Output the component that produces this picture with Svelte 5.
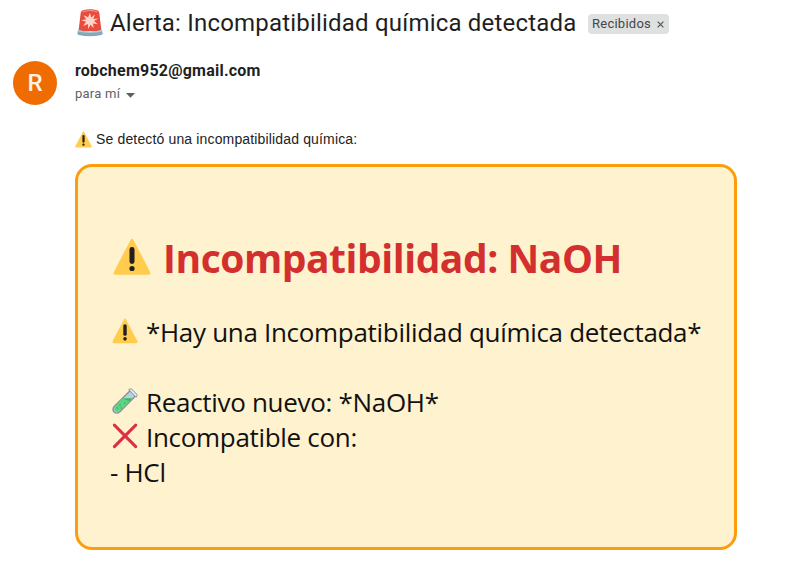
<script>
  let labelVisible = $state(true);
</script>

{#snippet warning()}
  <svg class="emoji" viewBox="0 0 38 38" aria-hidden="true">
    <path d="M17.4 2.2Q19-.6 20.6 2.2L37 33.7Q38.2 36.7 35.3 36.8H2.7Q-.2 36.7 1 33.7Z" fill="#ffcc4d" />
    <rect x="16.5" y="9" width="5" height="17" rx="2.4" fill="#231f20" />
    <circle cx="19" cy="30.5" r="2.6" fill="#231f20" />
  </svg>
{/snippet}

<main>
  <header class="subject">
    <svg class="siren" viewBox="0 0 26 28" aria-hidden="true">
      <path d="M5.2 1.5Q13-1 20.8 1.5Q22 2 22.3 4L24.5 22H1.5L3.7 4Q4 2 5.2 1.5Z" fill="#e94b3f" />
      <path d="M5.5 3Q13-.3 20.5 3" fill="none" stroke="#f58b7d" stroke-width="1.3" />
      <path d="m13 3.8 1.2 4.8 3.7-3.2-1.5 4.5 5-.4-4.3 2.5 3.8 3.3-5-.8.8 4.7-3.2-3.5-2.2 4.3-.5-5-4.6 2 2.8-4.2-4.6-1.5 4.8-1.1-2.7-4 4.6 2Z" fill="#ffd4c6" />
      <path d="M1 20.8Q13 24.6 25 20.8L25.6 24.4Q25.5 25.4 24.3 25.9Q13 28.8 1.7 25.9Q.5 25.4.4 24.4Z" fill="#84a8b9" />
      <path d="M1 20.8Q13 24.6 25 20.8L25.3 22.5Q13 25.3.7 22.5Z" fill="#b0cbd6" />
    </svg>
    <h1>Alerta: Incompatibilidad química detectada</h1>
    {#if labelVisible}
      <div class="label"><span>Recibidos</span>
        <button aria-label="Quitar Recibidos" onclick={() => (labelVisible = false)}>
          <svg width="7" height="7" viewBox="0 0 7 7"><path d="m.6.6 5.8 5.8M6.4.6.6 6.4" stroke="#50565a" stroke-width="1.2" /></svg>
        </button>
      </div>
    {/if}
  </header>

  <section class="sender">
    <div class="avatar">R</div>
    <div>
      <div class="address">robchem952@gmail.com</div>
      <div class="recipient"><span>para mí</span><svg width="9" height="5" viewBox="0 0 9 5"><path d="M0 0h9L4.5 4.8Z" fill="#5b5f63" /></svg></div>
    </div>
  </section>

  <p class="intro">{@render warning()}<span>Se detectó una incompatibilidad química:</span></p>

  <article>
    <h2>{@render warning()}<span>Incompatibilidad: NaOH</span></h2>
    <div class="lines">
      <p class="notice">{@render warning()}<span>*Hay una Incompatibilidad química detectada*</span></p>
      <p>
        <svg class="emoji" viewBox="0 0 26 26" aria-hidden="true">
          <path d="m18.3 2.4 5.4 5.4L8.2 23.4c-4.5 4.2-9.9-1-5.6-5.4Z" fill="#bad0d9" stroke="#85939d" stroke-width="1.4" />
          <path d="m10.2 10.4 10.2 0L7.8 22.7c-3.4 3-7.4-.8-4.5-4.2Z" fill="#59d77f" />
          <path d="m10.4 10.5 9.8-.2-2.8 3Z" fill="#36ba65" />
          <path d="m16.6 1.6 1.8-.8q.8-.2 1.4.4l5 5q.7.8.2 1.6l-1 1.5Z" fill="#d8e7ec" stroke="#8798a3" />
          <g fill="#3aa660"><circle cx="12.6" cy="15" r=".8" /><circle cx="8" cy="17" r=".8" /><circle cx="9.3" cy="20" r=".7" /><circle cx="5.4" cy="20" r=".7" /></g>
        </svg><span>Reactivo nuevo: *NaOH*</span>
      </p>
      <p>
        <svg class="emoji" viewBox="0 0 26 26" aria-hidden="true"><path d="m2.4 2.1 21.3 21.5M23.7 2.1 2.4 23.6" fill="none" stroke="#dd2e44" stroke-width="3" stroke-linecap="round" /></svg><span>Incompatible con:</span>
      </p>
      <p><span>- HCl</span></p>
    </div>
  </article>
</main>

<style>
  :global(body) { background: #fff; }
  main { width: 786px; height: 578px; box-sizing: border-box; overflow: hidden; font-family: Roboto, "Liberation Sans", sans-serif; color: #202124; }
  h1, h2, p { margin: 0; font-weight: 400; white-space: nowrap; }
  svg { display: block; flex: none; }
  .subject { height: 46px; padding-left: 77px; display: flex; align-items: center; }
  .siren { width: 26px; height: 28px; }
  h1 { margin-left: 7px; width: 478px; font: 400 24px/32px Roboto, sans-serif; color: #1f1f1f; letter-spacing: .2px; }
  .label { display: flex; align-items: center; width: 81px; height: 20px; box-sizing: border-box; padding-left: 4px; border-radius: 4px; background: #dfe1e0; color: #444746; font: 400 13px/20px Roboto, sans-serif; letter-spacing: .25px; margin-top: 2px; }
  .label span { width: 63px; }
  button { display: block; padding: 0; border: 0; background: none; margin-left: 2px; }
  .sender { display: flex; margin-top: 15px; padding-left: 13px; height: 64px; }
  .avatar { width: 44px; height: 44px; margin-right: 18px; border-radius: 50%; background: #ef6c00; color: #fff3e9; font-size: 24px; font-weight: 500; line-height: 45px; text-align: center; }
  .address { font: 700 16px/20px Roboto, sans-serif; letter-spacing: .22px; color: #1f1f1f; }
  .recipient { margin-top: 4px; display: flex; align-items: center; gap: 6px; font-size: 13px; line-height: 18px; color: #5e6266; letter-spacing: .25px; }
  .recipient svg { margin-top: 2px; }
  .intro { display: flex; align-items: center; height: 28px; padding-left: 75px; font: 14px/20px "Liberation Sans", sans-serif; letter-spacing: .15px; color: #222; }
  .intro .emoji { width: 17px; height: 17px; margin-right: 4px; }
  article { box-sizing: border-box; width: 662px; height: 386px; margin: 11px 0 0 75px; padding: 64px 0 0 32px; border: 3px solid #fa9e0e; border-radius: 17px; background: #fff2ce; font-family: "Open Sans", "Noto Sans", sans-serif; }
  h2 { display: flex; align-items: center; height: 54px; padding-left: 3px; font-size: 39px; line-height: 54px; font-weight: 700; color: #d32f2f; letter-spacing: -.45px; }
  h2 .emoji { width: 38px; height: 38px; margin: -3px 12px 0 0; }
  .lines { margin-top: 30px; font-size: 26px; line-height: 35px; color: #111; letter-spacing: -.31px; }
  .lines p { display: flex; align-items: center; height: 35px; }
  .lines .notice { margin-bottom: 35px; }
  .lines .emoji { width: 26px; height: 26px; margin: -4px 8px 0 2px; }
</style>
